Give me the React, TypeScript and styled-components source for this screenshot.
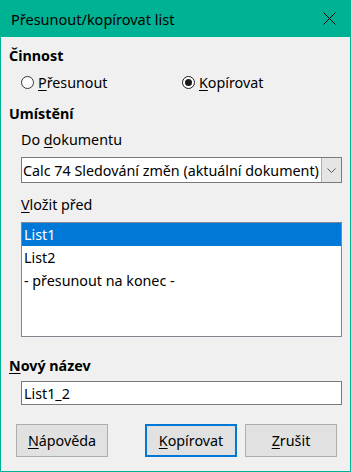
import React from "react";
import styled, { createGlobalStyle } from "styled-components";

const GlobalStyle = createGlobalStyle`
  html, body {
    margin: 0;
    padding: 0;
    background: #ffffff;
  }
  body {
    font-family: "Noto Sans", "Open Sans", sans-serif;
    font-size: 14.3px;
    color: #000;
  }
`;

const teal = "#00b294";

const Window = styled.div`
  width: 351px;
  height: 472px;
  box-sizing: border-box;
  border: 1px solid ${teal};
  border-top: none;
  background: #f0f0f0;
  display: flex;
  flex-direction: column;
`;

const TitleBar = styled.div`
  height: 37px;
  margin: 0 -1px;
  background: ${teal};
  display: flex;
  align-items: center;
  justify-content: space-between;
  padding: 0 15px 0 11px;
  font-size: 14.5px;
  color: #000;
`;

const Body = styled.div`
  display: flex;
  flex-direction: column;
  padding: 9px 8px 0 8px;
`;

const SectionTitle = styled.div<{ $top?: number }>`
  font-weight: bold;
  line-height: 20px;
  margin-top: ${(p) => p.$top ?? 0}px;
`;

const Indent = styled.div<{ $top?: number }>`
  margin-top: ${(p) => p.$top ?? 0}px;
  padding-left: 12px;
  display: flex;
  flex-direction: column;
`;

const RadioRow = styled.div`
  display: grid;
  grid-template-columns: 161px 1fr;
  height: 20px;
  align-items: center;
`;

const RadioOption = styled.label`
  display: flex;
  align-items: center;
  gap: 4px;
`;

const RadioCircle = styled.span<{ $checked?: boolean }>`
  width: 13px;
  height: 13px;
  box-sizing: border-box;
  border-radius: 50%;
  border: 1px solid ${(p) => (p.$checked ? "#1a1a1a" : "#333")};
  background: #fff;
  display: flex;
  align-items: center;
  justify-content: center;
  &::after {
    content: "";
    width: 7px;
    height: 7px;
    border-radius: 50%;
    background: ${(p) => (p.$checked ? "#1a1a1a" : "transparent")};
  }
`;

const Key = styled.span`
  text-decoration: underline;
  text-underline-offset: 2px;
`;

const FieldLabel = styled.div<{ $top?: number }>`
  line-height: 20px;
  margin-top: ${(p) => p.$top ?? 0}px;
`;

const Combo = styled.div`
  margin-top: 7px;
  height: 26px;
  box-sizing: border-box;
  border: 1px solid #7a7a7a;
  background: #fff;
  display: flex;
  align-items: stretch;
`;

const ComboText = styled.div`
  flex: 1;
  padding-left: 1px;
  display: flex;
  align-items: center;
  white-space: nowrap;
  overflow: hidden;
`;

const ComboButton = styled.div`
  width: 20px;
  box-sizing: border-box;
  border-left: 1px solid #adadad;
  background: #e5e5e5;
  display: flex;
  align-items: center;
  justify-content: center;
`;

const ListBox = styled.div`
  margin-top: 7px;
  height: 115px;
  box-sizing: border-box;
  border: 1px solid #828790;
  background: #fff;
`;

const ListItem = styled.div<{ $selected?: boolean }>`
  height: 23px;
  line-height: 23px;
  padding-left: 2px;
  background: ${(p) => (p.$selected ? "#0078d7" : "transparent")};
  color: ${(p) => (p.$selected ? "#fff" : "#000")};
`;

const TextInput = styled.div`
  margin-top: 5px;
  height: 24px;
  box-sizing: border-box;
  border: 1px solid #7a7a7a;
  background: #fff;
  padding-left: 2px;
  display: flex;
  align-items: center;
`;

const ButtonRow = styled.div`
  margin-top: 19px;
  display: flex;
  padding-left: 7px;
`;

const Button = styled.div<{ $default?: boolean; $gap?: number }>`
  width: 92px;
  height: 33px;
  box-sizing: border-box;
  margin-left: ${(p) => p.$gap ?? 0}px;
  background: #e1e1e1;
  border: ${(p) => (p.$default ? "2px solid #0078d7" : "1px solid #adadad")};
  display: flex;
  align-items: center;
  justify-content: center;
`;

const CloseIcon = () => (
  <svg width="13" height="13" viewBox="0 0 13 13">
    <path d="M0.5 0.5 L12.5 12.5 M12.5 0.5 L0.5 12.5" stroke="#000" strokeWidth="1" />
  </svg>
);

const Chevron = () => (
  <svg width="9" height="5" viewBox="0 0 9 5">
    <path d="M0.5 0.5 L4.5 4.5 L8.5 0.5" stroke="#555" strokeWidth="1" fill="none" />
  </svg>
);

export default function App() {
  return (
    <>
      <GlobalStyle />
      <Window>
        <TitleBar>
          <span>Přesunout/kopírovat list</span>
          <CloseIcon />
        </TitleBar>
        <Body>
          <SectionTitle>Činnost</SectionTitle>
          <Indent $top={6}>
            <RadioRow>
              <RadioOption>
                <RadioCircle />
                <span>
                  <Key>P</Key>řesunout
                </span>
              </RadioOption>
              <RadioOption>
                <RadioCircle $checked />
                <span>
                  <Key>K</Key>opírovat
                </span>
              </RadioOption>
            </RadioRow>
          </Indent>
          <SectionTitle $top={12}>Umístění</SectionTitle>
          <Indent $top={6}>
            <FieldLabel>
              Do <Key>d</Key>okumentu
            </FieldLabel>
            <Combo>
              <ComboText>Calc 74 Sledování změn (aktuální dokument)</ComboText>
              <ComboButton>
                <Chevron />
              </ComboButton>
            </Combo>
            <FieldLabel $top={12}>
              <Key>V</Key>ložit před
            </FieldLabel>
            <ListBox>
              <ListItem $selected>List1</ListItem>
              <ListItem>List2</ListItem>
              <ListItem>- přesunout na konec -</ListItem>
            </ListBox>
          </Indent>
          <SectionTitle $top={19}>
            <Key>N</Key>ový název
          </SectionTitle>
          <Indent>
            <TextInput>List1_2</TextInput>
          </Indent>
          <ButtonRow>
            <Button>
              <span>
                <Key>N</Key>ápověda
              </span>
            </Button>
            <Button $default $gap={37}>
              <span>
                <Key>K</Key>opírovat
              </span>
            </Button>
            <Button $gap={8}>
              <span>
                <Key>Z</Key>rušit
              </span>
            </Button>
          </ButtonRow>
        </Body>
      </Window>
    </>
  );
}
